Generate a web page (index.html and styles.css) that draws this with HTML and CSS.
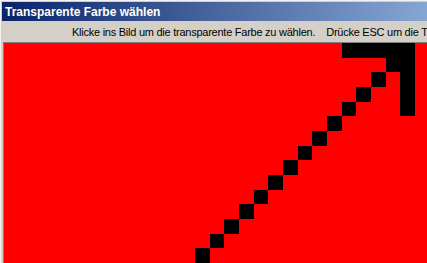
FILE: index.html
```html
<!DOCTYPE html>
<html lang="de">
<head>
<meta charset="utf-8">
<title>Transparente Farbe wählen</title>
<link rel="stylesheet" href="styles.css">
</head>
<body>
<div class="window">
  <div class="titlebar">Transparente Farbe wählen</div>
  <div class="hintbar"><span>Klicke ins Bild um die transparente Farbe zu wählen.</span><span class="hint2">Drücke ESC um die Transparenz zu entfernen.</span></div>
  <div class="canvas">
    <svg class="pic" width="423" height="220" viewBox="-13.023 0 28.841 15" preserveAspectRatio="none" shape-rendering="crispEdges">
      <rect x="-14" y="0" width="30" height="15" fill="#ff0000"/>
      <g fill="#000">
        <rect x="10" y="0" width="5" height="1"/>
        <rect x="13" y="1" width="2" height="1"/>
        <rect x="14" y="2" width="1" height="3"/>
        <rect x="12" y="2" width="1" height="1"/>
        <rect x="11" y="3" width="1" height="1"/>
        <rect x="10" y="4" width="1" height="1"/>
        <rect x="9" y="5" width="1" height="1"/>
        <rect x="8" y="6" width="1" height="1"/>
        <rect x="7" y="7" width="1" height="1"/>
        <rect x="6" y="8" width="1" height="1"/>
        <rect x="5" y="9" width="1" height="1"/>
        <rect x="4" y="10" width="1" height="1"/>
        <rect x="3" y="11" width="1" height="1"/>
        <rect x="2" y="12" width="1" height="1"/>
        <rect x="1" y="13" width="1" height="1"/>
        <rect x="0" y="14" width="1" height="1"/>
      </g>
    </svg>
  </div>
</div>
</body>
</html>
```
FILE: styles.css
```css
html, body {
  margin: 0;
  padding: 0;
  overflow: hidden;
  background: #d4d0c8;
}
.window {
  width: 600px;
  border-top: 1px solid #f4f3ee;
  border-left: 1px solid #f4f3ee;
  padding: 1px 0 0 1px;
  background: #d4d0c8;
}
.titlebar {
  height: 19px;
  box-sizing: border-box;
  padding: 2px 0 0 3px;
  line-height: 17px;
  font-family: "Liberation Sans", Arial, sans-serif;
  font-weight: bold;
  font-size: 12px;
  color: #ffffff;
  background: linear-gradient(to right, #0a246a 0px, #a6caf0 540px);
  white-space: nowrap;
}
.hintbar {
  height: 21px;
  box-sizing: border-box;
  padding: 2px 0 0 70px;
  line-height: 19px;
  font-family: "Liberation Sans", Arial, sans-serif;
  font-size: 11px;
  letter-spacing: -0.25px;
  color: #000;
  white-space: nowrap;
  overflow: hidden;
}
.hint2 {
  margin-left: 11px;
}
.canvas {
  margin-left: 1px;
  border-top: 1px solid #808080;
  border-left: 1px solid #808080;
  height: 220px;
  overflow: hidden;
}
.pic {
  display: block;
}
```
